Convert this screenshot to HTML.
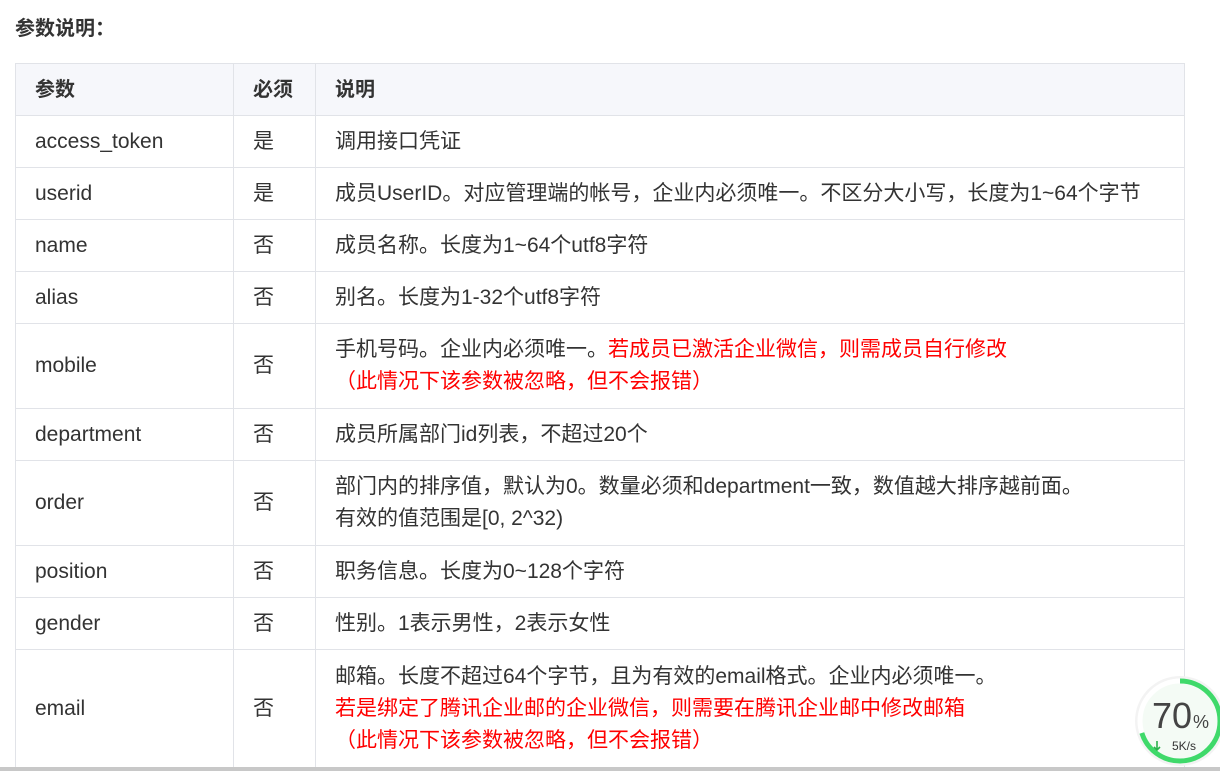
<!DOCTYPE html>
<html><head><meta charset="utf-8"><style>
body{margin:0;width:1220px;height:771px;overflow:hidden;background:#fff;font-family:"Liberation Sans","Noto Sans CJK SC",sans-serif;color:#333;}
h3{position:absolute;left:15px;top:14px;margin:0;font-size:20px;font-weight:bold;line-height:30px;}
.t{position:absolute;left:15px;top:63px;width:1169px;border-left:1px solid #e1e3e8;font-size:21px;}
.row{display:flex;border-top:1px solid #e1e3e8;box-sizing:border-box;}
.row>div{border-right:1px solid #e1e3e8;padding:0 19px;line-height:32px;display:flex;flex-direction:column;justify-content:center;box-sizing:border-box;}
.row>div:nth-child(1){width:218px}.row>div:nth-child(2){width:82px}.row>div:nth-child(3){flex:1}
.h{background:#f6f7fb;font-weight:bold;font-size:20px;}
.r{color:#f00}
.bar{position:absolute;left:0;top:767px;width:1220px;height:4px;background:#c8c8c8;}
</style></head><body>
<h3>参数说明：</h3>
<div class="t">
<div class="row h" style="height:52px"><div>参数</div><div>必须</div><div>说明</div></div>
<div class="row" style="height:52px"><div>access_token</div><div>是</div><div>调用接口凭证</div></div>
<div class="row" style="height:52px"><div>userid</div><div>是</div><div>成员UserID。对应管理端的帐号，企业内必须唯一。不区分大小写，长度为1~64个字节</div></div>
<div class="row" style="height:52px"><div>name</div><div>否</div><div>成员名称。长度为1~64个utf8字符</div></div>
<div class="row" style="height:52px"><div>alias</div><div>否</div><div>别名。长度为1-32个utf8字符</div></div>
<div class="row" style="height:85px"><div>mobile</div><div>否</div><div><span>手机号码。企业内必须唯一。<span class="r">若成员已激活企业微信，则需成员自行修改<br>（此情况下该参数被忽略，但不会报错）</span></span></div></div>
<div class="row" style="height:52px"><div>department</div><div>否</div><div>成员所属部门id列表，不超过20个</div></div>
<div class="row" style="height:85px"><div>order</div><div>否</div><div><span>部门内的排序值，默认为0。数量必须和department一致，数值越大排序越前面。<br>有效的值范围是[0, 2^32)</span></div></div>
<div class="row" style="height:52px"><div>position</div><div>否</div><div>职务信息。长度为0~128个字符</div></div>
<div class="row" style="height:52px"><div>gender</div><div>否</div><div>性别。1表示男性，2表示女性</div></div>
<div class="row" style="height:118px"><div>email</div><div>否</div><div><span>邮箱。长度不超过64个字节，且为有效的email格式。企业内必须唯一。<br><span class="r">若是绑定了腾讯企业邮的企业微信，则需要在腾讯企业邮中修改邮箱<br>（此情况下该参数被忽略，但不会报错）</span></span></div></div>
</div>
<div class="bar"></div>
<svg style="position:absolute;left:1128px;top:672px" width="100" height="100">
<circle cx="52" cy="49" r="45" fill="#f3f3f3"/>
<circle cx="52" cy="49" r="38" fill="#f4fbf5"/>
<circle cx="52" cy="49" r="40" fill="none" stroke="#fff" stroke-width="5"/>
<circle cx="52" cy="49" r="40" fill="none" stroke="#3fd96a" stroke-width="5" stroke-dasharray="176 252" transform="rotate(-90 52 49)"/>
<text x="24" y="56" font-family="Liberation Sans" font-size="36" fill="#444">70</text>
<text x="65" y="56" font-family="Liberation Sans" font-size="18" fill="#444">%</text>
<text x="44" y="78" font-family="Liberation Sans" font-size="12" fill="#333">5K/s</text>
<path d="M29 69v9M26 75l3 3 3-3" stroke="#2bb24c" stroke-width="1.6" fill="none"/>
</svg>
</body></html>
